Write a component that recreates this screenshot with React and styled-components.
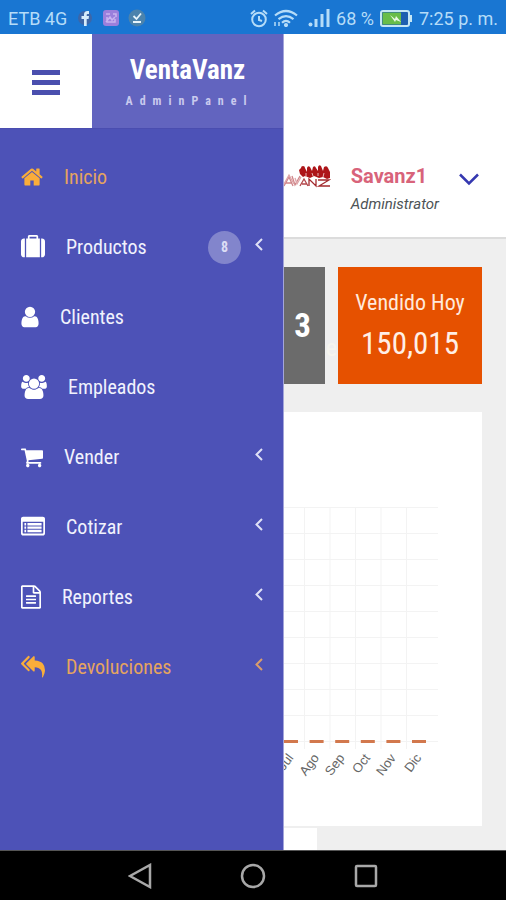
import styled, { createGlobalStyle } from "styled-components";

const GlobalStyle = createGlobalStyle`
  * {
    box-sizing: border-box;
  }

  body {
    margin: 0;
    font-family: "Roboto Condensed", "Liberation Sans Narrow", Roboto, sans-serif;
    background-color: #000;
  }

  button {
    border: 0;
    padding: 0;
    background: none;
    cursor: pointer;
  }
`;

const Screen = styled.div`
  min-height: 100vh;
  display: grid;
  grid-template-rows: 34px 1fr 50px;
`;

const StatusBar = styled.header`
  display: flex;
  align-items: center;
  justify-content: space-between;
  padding: 2px 8px 0;
  background-color: #1976d2;
  color: #b5dcf8;
  font-family: Roboto, sans-serif;
  font-size: 18px;
`;

const StatusGroup = styled.div`
  display: flex;
  align-items: center;
  gap: ${({ $gap }) => $gap}px;
`;

const AppArea = styled.div`
  position: relative;
  overflow: hidden;
  background-color: #efefef;
`;

const Drawer = styled.aside`
  position: absolute;
  top: 0;
  bottom: 0;
  left: 0;
  width: 284px;
  background-color: #4d52b7;
  border-right: 1px solid #a3a5da;
`;

const DrawerHeader = styled.div`
  display: flex;
  height: 95px;
  border-bottom: 1px solid #4a4db0;
`;

const ToggleButton = styled.button`
  flex: 0 0 92px;
  display: flex;
  align-items: center;
  justify-content: center;
  padding-top: 3px;
  background-color: #fff;
`;

const Brand = styled.div`
  flex: 1;
  display: flex;
  flex-direction: column;
  align-items: center;
  justify-content: center;
  gap: 8px;
  background-color: #6264bf;
  color: #fff;

  h1 {
    margin: 0;
    font-size: 27px;
    line-height: 32px;
  }

  p {
    margin: 0;
    padding-left: 4px;
    font-size: 12px;
    font-weight: 700;
    line-height: 14px;
    letter-spacing: 7px;
    color: #c9caee;
  }
`;

const Menu = styled.ul`
  list-style: none;
  margin: 0;
  padding: 13px 0 0;
`;

const MenuLink = styled.a`
  display: flex;
  align-items: center;
  height: 70px;
  padding: 0 20px 0 21px;
  color: ${({ $active }) => ($active ? "#e5a45f" : "#f1f2fd")};
  font-size: 20px;
  text-decoration: none;
`;

const MenuIcon = styled.svg`
  flex: none;
  height: 24px;
  margin-right: 21px;
  fill: ${({ $active }) => ($active ? "#f9ad3a" : "#fff")};
`;

const MenuLabel = styled.span`
  flex: 1;
`;

const Badge = styled.span`
  display: flex;
  align-items: center;
  justify-content: center;
  width: 33px;
  height: 33px;
  margin-right: 14px;
  border-radius: 50%;
  background-color: #8285cc;
  color: #dcddf5;
  font-size: 14px;
  font-weight: 700;
`;

const Arrow = styled.svg`
  flex: none;
  margin-bottom: 5px;
`;

const TopBar = styled.div`
  display: flex;
  align-items: flex-end;
  justify-content: flex-end;
  gap: 20px;
  height: 205px;
  padding: 0 27px 19px;
  background-color: #fff;
  border-bottom: 2px solid #dcdcdc;
`;

const TopLogo = styled.svg`
  margin-bottom: 30px;
`;

const UserName = styled.div`
  color: #d8637a;
  font-family: Roboto, sans-serif;
  font-size: 20px;
  font-weight: 700;
  line-height: 28px;
`;

const UserRole = styled.div`
  color: #4d5356;
  font-family: Roboto, sans-serif;
  font-size: 15px;
  font-style: italic;
  line-height: 28px;
`;

const UserMenuButton = styled.button`
  display: flex;
  margin-bottom: 32px;
`;

const Content = styled.main`
  padding: 28px 24px 0;
`;

const Stats = styled.section`
  display: grid;
  grid-template-columns: repeat(3, 1fr);
  gap: 13px;
  margin-bottom: 28px;
`;

const StatCard = styled.article`
  position: relative;
  display: flex;
  flex-direction: column;
  align-items: ${({ $end }) => ($end ? "flex-end" : "center")};
  justify-content: center;
  height: 117px;
  padding: 0 ${({ $end }) => ($end ? 14 : 0)}px;
  background-color: ${({ $color }) => $color};
  color: #fff;
`;

const StatTitle = styled.h2`
  margin: 0;
  color: #ffe9dc;
  font-size: 22px;
  font-weight: 400;
  line-height: 36px;
`;

const StatValue = styled.div`
  font-size: ${({ $bold }) => ($bold ? 33 : 31)}px;
  font-weight: ${({ $bold }) => ($bold ? 700 : 400)};
  line-height: 46px;
  color: ${({ $bold }) => ($bold ? "#fff" : "#ffefe6")};
`;

const StatOverflow = styled.span`
  position: absolute;
  right: -12px;
  bottom: 22px;
  color: #f6f5ee;
  font-size: 24px;
`;

const Panel = styled.section`
  background-color: #fff;
  margin-bottom: 2px;

  svg {
    display: block;
    width: 100%;
  }

  text {
    fill: #666;
    font-family: "Liberation Sans", sans-serif;
    font-size: 13px;
  }
`;

const NextPanel = styled.section`
  width: 64%;
  height: 22px;
  background-color: #fff;
`;

const NavBar = styled.nav`
  display: flex;
  align-items: center;
  justify-content: center;
  gap: 88px;
  background-color: #000;
  border-top: 1px solid #555;
`;

const NavButton = styled.button`
  display: flex;
`;

const menuItems = [
  {
    label: "Inicio",
    active: true,
    width: 22,
    box: "64 0 1664 1792",
    path: "M1472 992v480q0 26-19 45t-45 19h-384v-384h-256v384h-384q-26 0-45-19t-19-45v-480q0-1 .5-3t.5-3l575-474 575 474q1 2 1 6zm223-69l-62 74q-8 9-21 11h-3q-13 0-21-7l-692-577-692 577q-12 8-24 7-13-2-21-11l-62-74q-8-10-7-23.5t11-21.5l719-599q32-26 76-26t76 26l244 204v-195q0-14 9-23t23-9h192q14 0 23 9t9 23v408l219 182q10 8 11 21.5t-7 23.5z",
  },
  {
    label: "Productos",
    badge: 8,
    arrow: true,
    width: 24,
    box: "0 0 1792 1792",
    path: "M640 256h512v-128h-512v128zm-352 0v1408h-64q-92 0-158-66t-66-158v-960q0-92 66-158t158-66h64zm1120 0v1408h-1024v-1408h128v-160q0-40 28-68t68-28h576q40 0 68 28t28 68v160h128zm384 224v960q0 92-66 158t-158 66h-64v-1408h64q92 0 158 66t66 158z",
  },
  {
    label: "Clientes",
    width: 18,
    box: "256 0 1280 1792",
    path: "M1536 1399q0 109-62.5 187t-150.5 78h-854q-88 0-150.5-78t-62.5-187q0-85 8.5-160.5t31.5-152 58.5-131 94-89 134.5-34.5q131 128 313 128t313-128q76 0 134.5 34.5t94 89 58.5 131 31.5 152 8.5 160.5zm-256-887q0 159-112.5 271.5t-271.5 112.5-271.5-112.5-112.5-271.5 112.5-271.5 271.5-112.5 271.5 112.5 112.5 271.5z",
  },
  {
    label: "Empleados",
    width: 26,
    box: "-64 0 1920 1792",
    path: "M529 896q-162 5-265 128h-134q-82 0-138-40.5t-56-118.5q0-353 124-353 6 0 43.5 21t97.5 42.5 119 21.5q67 0 133-23-5 37-5 66 0 139 81 256zm1071 637q0 120-73 189.5t-194 69.5h-874q-121 0-194-69.5t-73-189.5q0-53 3.5-103.5t14-109 26.5-108.5 43-97.5 62-81 85.5-53.5 111.5-20q10 0 43 21.5t73 48 107 48 135 21.5 135-21.5 107-48 73-48 43-21.5q61 0 111.5 20t85.5 53.5 62 81 43 97.5 26.5 108.5 14 109 3.5 103.5zm-1024-1277q0 106-75 181t-181 75-181-75-75-181 75-181 181-75 181 75 75 181zm704 384q0 159-112.5 271.5t-271.5 112.5-271.5-112.5-112.5-271.5 112.5-271.5 271.5-112.5 271.5 112.5 112.5 271.5zm576 225q0 78-56 118.5t-138 40.5h-134q-103-123-265-128 81-117 81-256 0-29-5-66 66 23 133 23 59 0 119-21.5t97.5-42.5 43.5-21q124 0 124 353zm-128-609q0 106-75 181t-181 75-181-75-75-181 75-181 181-75 181 75 75 181z",
  },
  {
    label: "Vender",
    arrow: true,
    width: 22,
    box: "64 0 1664 1792",
    path: "M704 1536q0 52-38 90t-90 38-90-38-38-90 38-90 90-38 90 38 38 90zm896 0q0 52-38 90t-90 38-90-38-38-90 38-90 90-38 90 38 38 90zm128-1088v512q0 24-16.5 42.5t-40.5 21.5l-1044 122q13 60 13 70 0 16-24 64h920q26 0 45 19t19 45-19 45-45 19h-1024q-26 0-45-19t-19-45q0-11 8-31.5t16-36 21.5-40 15.5-29.5l-177-823h-204q-26 0-45-19t-19-45 19-45 45-19h256q16 0 28.5 6.5t19.5 15.5 13 24.5 8 26 5.5 29.5 4.5 26h1201q26 0 45 19t19 45z",
  },
  {
    label: "Cotizar",
    arrow: true,
    width: 24,
    box: "0 0 1792 1792",
    path: "M160 128h1472q66 0 113 47t47 113v1088q0 66-47 113t-113 47h-1472q-66 0-113-47t-47-113v-1088q0-66 47-113t113-47zM128 512v832q0 32 32 32h1472q32 0 32-32v-832zM256 600h128v180h-128zM480 600h1056v180h-1056zM256 850h128v180h-128zM480 850h1056v180h-1056zM256 1100h128v180h-128zM480 1100h1056v180h-1056z",
  },
  {
    label: "Reportes",
    arrow: true,
    width: 20,
    box: "128 0 1536 1792",
    path: "M1596 380q28 28 48 76t20 88v1152q0 40-28 68t-68 28h-1344q-40 0-68-28t-28-68v-1600q0-40 28-68t68-28h896q40 0 88 20t76 48zm-444-244v376h376q-10-29-22-41l-313-313q-12-12-41-22zm384 1528v-1024h-416q-40 0-68-28t-28-68v-416h-768v1536h1280zm-1024-864q0-14 9-23t23-9h704q14 0 23 9t9 23v64q0 14-9 23t-23 9h-704q-14 0-23-9t-9-23v-64zm736 224q14 0 23 9t9 23v64q0 14-9 23t-23 9h-704q-14 0-23-9t-9-23v-64q0-14 9-23t23-9h704zm0 256q14 0 23 9t9 23v64q0 14-9 23t-23 9h-704q-14 0-23-9t-9-23v-64q0-14 9-23t23-9h704z",
  },
  {
    label: "Devoluciones",
    active: true,
    arrow: true,
    width: 24,
    box: "0 0 1792 1792",
    path: "M640 1082v70q0 42-39 59-13 5-25 5-27 0-45-19l-512-512q-19-19-19-45t19-45l512-512q29-31 70-14 39 17 39 59v69l-397 398q-19 19-19 45t19 45zm1152 58q0 58-17 133.5t-38.5 138-48 125-40.5 90.5l-20 40q-8 17-28 17-6 0-9-1-25-8-23-34 43-400-106-565-64-71-170.5-110.5t-267.5-52.5v251q0 42-39 59-13 5-25 5-27 0-45-19l-512-512q-19-19-19-45t19-45l512-512q29-31 70-14 39 17 39 59v262q411 28 599 221 169 173 169 509z",
  },
];

const months = ["Jul", "Ago", "Sep", "Oct", "Nov", "Dic"];
const gridRows = [95, 121, 147, 173, 199, 225, 251, 277, 303, 329];

const StatusIcons = () => (
  <>
    <svg width="18" height="18" viewBox="0 0 18 18">
      <circle cx="9" cy="9" r="7" fill="#3c66a8" />
      <path d="M8 17v-7H5.500V7H8V5.500Q8 2 11.500 2H13v3h-1.500q-.8 0-.8 1v1H13l-.4 3h-1.900v7z" fill="#d6ecfb" />
    </svg>
    <svg width="16" height="16" viewBox="0 0 16 16">
      <rect width="16" height="16" rx="3" fill="#9b7fdc" />
      <path d="M3 4h4M10 4h3v3M3 12l4-5 2 3 3-3M4 7v5h8V9" stroke="#c9b4f0" fill="none" strokeWidth="1.500" />
    </svg>
    <svg width="18" height="18" viewBox="0 0 18 18">
      <circle cx="9" cy="9" r="8.500" fill="#4b83ad" />
      <path d="M5.500 7l3 3L13 4.500M5 13h8" stroke="#e6f4fb" fill="none" strokeWidth="1.800" />
    </svg>
  </>
);

const AlarmIcon = () => (
  <svg width="18" height="19" viewBox="0 0 18 19" fill="none" stroke="#b5dcf8" strokeWidth="2">
    <circle cx="9" cy="10.500" r="6.800" />
    <path d="M9 7v4l3 1M1 5l4-3.500M17 5l-4-3.500" />
  </svg>
);

const WifiIcon = () => (
  <svg width="24" height="18" viewBox="0 0 24 18" fill="none" stroke="#b5dcf8" strokeWidth="2.200">
    <path d="M1 6.500q11-9 22 0M4.500 10.200q7.500-6.200 15 0M8 13.700q4-3.700 8 0" />
    <circle cx="12" cy="16" r="1" />
    <path d="M1 17v-4M5 17v-4" strokeWidth="1.500" />
  </svg>
);

const SignalIcon = () => (
  <svg width="22" height="18" viewBox="0 0 22 18" fill="#b5dcf8">
    <circle cx="2.500" cy="15.500" r="2" />
    <path d="M6.500 10h3v8h-3zM12.500 5h3v13h-3zM18.500 0h3v18h-3z" />
  </svg>
);

const BatteryIcon = () => (
  <svg width="33" height="17" viewBox="0 0 33 17">
    <rect x="1" y="1" width="28" height="15" rx="2" fill="#1d5fb0" stroke="#c4e6f5" strokeWidth="2" />
    <path d="M30 5h2v7h-2z" fill="#c4e6f5" />
    <path d="M2.500 2.500H21v12H2.500z" fill="#68bd49" />
    <path d="M10 5l5 4 1-3 5 6-5-2-1 2z" fill="#e9f8e4" />
  </svg>
);

const SavanzLogo = () => (
  <TopLogo width="66" height="24" viewBox="0 0 66 24" role="img" aria-label="Savanz">
    <g fill="none" stroke="#cf8589" strokeWidth="1.300">
      <path d="M10 22q8 2 7-2t-5-4q2-3 6-1M19 22l5-9 4 9M21 19h6M27 12l3 9 5-9" />
      <path d="M19 20l5-9 5 9M30 14l2 6 4-7" stroke="#dfa5a8" />
      <path d="M35 22l4-7 4 7M37 20h5" stroke="#b3474b" />
      <path d="M44 22v-7l7 7v-7M53 16h11l-10 6h11" stroke="#a32a2e" />
    </g>
    <g fill="#ad1519">
      <path d="M36 4q0-2 2-2t2 2l2 4V4q1-3 3-1l2 4 1-4q2-2 3 1l2 3V3q1-3 3-1l2 5 1-4q3-2 4 1l2 4v6l-3 1-4-2-4 1-5-2-4 2-5-2-2 1-3-3-1-4z" />
    </g>
    <path d="M41 9v4M47 9l1 3M53 9v3M59 9l-1 4" stroke="#e7b4b5" fill="none" />
  </TopLogo>
);

const Item = ({ item }) => (
  <li>
    <MenuLink href="#" $active={item.active}>
      <MenuIcon
        width={item.width}
        viewBox={item.box}
        $active={item.active}
        fillRule="evenodd"
        aria-hidden="true"
      >
        <path d={item.path} />
      </MenuIcon>
      <MenuLabel>{item.label}</MenuLabel>
      {item.badge && <Badge>{item.badge}</Badge>}
      {item.arrow && (
        <Arrow width="8" height="13" viewBox="0 0 8 13" aria-hidden="true">
          <path
            d="M7 1L1.500 6.500 7 12"
            fill="none"
            stroke={item.active ? "#d99d6c" : "#dfe0f6"}
            strokeWidth="2"
          />
        </Arrow>
      )}
    </MenuLink>
  </li>
);

const SalesChart = () => (
  <svg viewBox="0 0 458 414" role="img" aria-label="Ventas por mes">
    <g stroke="#f3f3f3">
      {gridRows.map((y) => (
        <path key={y} d={`M250 ${y}.500H414`} />
      ))}
      {months.map((month, index) => (
        <path key={month} d={`M${255 + index * 25.5} 95V337`} />
      ))}
    </g>
    {months.map((month, index) => {
      const x = 260 + index * 25.6;
      return (
        <g key={month}>
          <rect x={x} y="328" width="14" height="3" fill="#d2784d" />
          <text
            textAnchor="end"
            transform={`translate(${x + 10} 346) rotate(-53)`}
          >
            {month}
          </text>
        </g>
      );
    })}
  </svg>
);

const App = () => {
  return (
    <Screen>
      <GlobalStyle />
      <StatusBar>
        <StatusGroup $gap={9}>
          <span>ETB 4G</span>
          <StatusIcons />
        </StatusGroup>
        <StatusGroup $gap={10}>
          <StatusGroup $gap={6}>
            <AlarmIcon />
            <WifiIcon />
          </StatusGroup>
          <StatusGroup $gap={6}>
            <SignalIcon />
            <span>68 %</span>
            <BatteryIcon />
            <span>7:25 p. m.</span>
          </StatusGroup>
        </StatusGroup>
      </StatusBar>
      <AppArea>
        <TopBar>
          <SavanzLogo />
          <div>
            <UserName>Savanz1</UserName>
            <UserRole>Administrator</UserRole>
          </div>
          <UserMenuButton aria-label="Abrir menú de usuario">
            <svg width="20" height="13" viewBox="0 0 20 13">
              <path d="M1 1.500l9 9 9-9" fill="none" stroke="#3538b0" strokeWidth="2.500" />
            </svg>
          </UserMenuButton>
        </TopBar>
        <Content>
          <Stats>
            <StatCard $color="#6b6b6b" />
            <StatCard $color="#6b6b6b" $end>
              <StatValue $bold>3</StatValue>
              <StatOverflow>e</StatOverflow>
            </StatCard>
            <StatCard $color="#e65100">
              <StatTitle>Vendido Hoy</StatTitle>
              <StatValue>150,015</StatValue>
            </StatCard>
          </Stats>
          <Panel>
            <SalesChart />
          </Panel>
          <NextPanel />
        </Content>
        <Drawer>
          <DrawerHeader>
            <ToggleButton aria-label="Menú">
              <svg width="28" height="25" viewBox="0 0 28 25" fill="#4a4fae">
                <path d="M0 0h28v5H0zM0 10h28v5H0zM0 20h28v5H0z" />
              </svg>
            </ToggleButton>
            <Brand>
              <h1>VentaVanz</h1>
              <p>AdminPanel</p>
            </Brand>
          </DrawerHeader>
          <Menu>
            {menuItems.map((item) => (
              <Item key={item.label} item={item} />
            ))}
          </Menu>
        </Drawer>
      </AppArea>
      <NavBar>
        <NavButton aria-label="Atrás">
          <svg width="24" height="26" viewBox="0 0 24 26" fill="none" stroke="#a8a8a8" strokeWidth="2.500">
            <path d="M22 2v22L2 13z" />
          </svg>
        </NavButton>
        <NavButton aria-label="Inicio">
          <svg width="26" height="26" viewBox="0 0 26 26" fill="none" stroke="#a8a8a8" strokeWidth="2.500">
            <circle cx="13" cy="13" r="11" />
          </svg>
        </NavButton>
        <NavButton aria-label="Recientes">
          <svg width="24" height="24" viewBox="0 0 24 24" fill="none" stroke="#a8a8a8" strokeWidth="2.500">
            <rect x="2" y="2" width="20" height="20" rx="1" />
          </svg>
        </NavButton>
      </NavBar>
    </Screen>
  );
};

export default App;
